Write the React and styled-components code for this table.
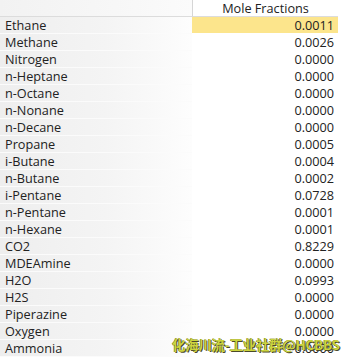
import React from 'react';
import styled, { createGlobalStyle } from 'styled-components';

const GlobalStyle = createGlobalStyle`
  html, body {
    margin: 0;
    padding: 0;
    background: #ffffff;
  }
`;

const Page = styled.div`
  position: relative;
  width: 341px;
  height: 359px;
  overflow: hidden;
  font-family: "Open Sans", "Noto Sans", sans-serif;
  font-size: 12.7px;
  color: #222;
  background: #fff;
`;

const Grid = styled.div`
  display: grid;
  grid-template-columns: 192px 146px;
`;

const HeaderCell = styled.div`
  height: 16px;
  line-height: 16px;
  border-bottom: 1px solid #dcdcdc;
  background: ${p => (p.$value ? '#ffffff' : 'linear-gradient(to right, #f2f2f2, #f7f7f7 60%, #fbfbfb)')};
  border-left: ${p => (p.$value ? '1px solid #d6d6d6' : 'none')};
  text-align: center;
  color: #222;
`;

const NameCell = styled.div`
  height: 16px;
  line-height: 16px;
  padding-left: 5px;
  border-bottom: 1px solid #fbfbfb;
  background: linear-gradient(to right, #eeeeee, #f4f4f4 55%, #fdfdfd);
`;

const ValueCell = styled.div`
  height: 16px;
  line-height: 16px;
  padding-right: 4px;
  text-align: right;
  border-bottom: 1px solid #ffffff;
  background: ${p => (p.$selected ? '#fce58c' : '#ffffff')};
`;

const Watermark = styled.div`
  position: absolute;
  left: 172px;
  top: 334px;
  font-family: "Noto Sans CJK SC", sans-serif;
  font-size: 13.5px;
  font-weight: 700;
  letter-spacing: -0.3px;
  color: #ccd43e;
  text-shadow: 1px 1px 0 #4a4a2a, -0.5px -0.5px 0 #6a6a3a;
  white-space: nowrap;
`;

const rows = [
  ['Ethane', '0.0011'],
  ['Methane', '0.0026'],
  ['Nitrogen', '0.0000'],
  ['n-Heptane', '0.0000'],
  ['n-Octane', '0.0000'],
  ['n-Nonane', '0.0000'],
  ['n-Decane', '0.0000'],
  ['Propane', '0.0005'],
  ['i-Butane', '0.0004'],
  ['n-Butane', '0.0002'],
  ['i-Pentane', '0.0728'],
  ['n-Pentane', '0.0001'],
  ['n-Hexane', '0.0001'],
  ['CO2', '0.8229'],
  ['MDEAmine', '0.0000'],
  ['H2O', '0.0993'],
  ['H2S', '0.0000'],
  ['Piperazine', '0.0000'],
  ['Oxygen', '0.0000'],
  ['Ammonia', '0.0000'],
];

export default function App() {
  return (
    <Page>
      <GlobalStyle />
      <Grid>
        <HeaderCell />
        <HeaderCell $value>Mole Fractions</HeaderCell>
        {rows.map(([name, value], i) => (
          <React.Fragment key={name}>
            <NameCell>{name}</NameCell>
            <ValueCell $selected={i === 0}>{value}</ValueCell>
          </React.Fragment>
        ))}
      </Grid>
      <Watermark>化海川流-工业社群@HCBBS</Watermark>
    </Page>
  );
}
